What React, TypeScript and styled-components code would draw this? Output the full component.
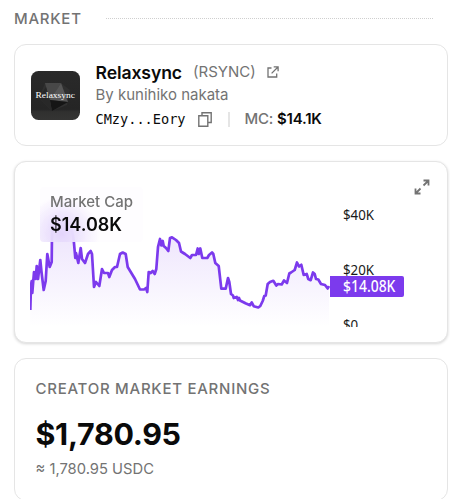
import React from "react";
import styled, { createGlobalStyle } from "styled-components";

const GlobalStyle = createGlobalStyle`
  * { box-sizing: border-box; }
  body { margin: 0; background: #fff; overflow: hidden; font-family: Inter, sans-serif; color: #0a0a0a; }
  #root { height: 499px; overflow: hidden; }
`;

const Page = styled.main`
  width: 450px;
  padding: 8px 2px 0 14px;
  display: flex;
  flex-direction: column;
`;

const SectionHeader = styled.header`
  display: flex;
  align-items: center;
  gap: 24px;
  height: 21px;
  padding-right: 15px;
  margin-bottom: 15px;
`;

const SectionTitle = styled.h2`
  margin: 0;
  font-size: 15px;
  line-height: 21px;
  font-weight: 500;
  letter-spacing: 0.75px;
  color: #737373;
`;

const DottedRule = styled.span`
  flex: 1;
  border-top: 1px dotted #cfcfcf;
`;

const Card = styled.section<{ $height: number; $raised?: boolean }>`
  flex: none;
  height: ${(p) => p.$height}px;
  border: 1px solid #e5e5e5;
  border-radius: 12px;
  background: #fff;
  margin-bottom: 15px;
  box-shadow: ${(p) => (p.$raised ? "0 1px 3px rgba(0,0,0,.16)" : "none")};
`;

const TokenCard = styled(Card)`
  display: flex;
  align-items: center;
  gap: 16px;
  padding: 0 16px 0 15.5px;
`;

const Artwork = styled.svg`
  width: 49px;
  height: 49px;
  flex: none;
`;

const TokenInfo = styled.div`
  display: flex;
  flex-direction: column;
  padding-top: 1px;
`;

const InfoRow = styled.div<{ $height: number; $gap?: number }>`
  display: flex;
  align-items: center;
  height: ${(p) => p.$height}px;
  gap: ${(p) => p.$gap ?? 0}px;
  white-space: nowrap;
`;

const TokenName = styled.span`
  font-size: 17.6px;
  font-weight: 600;
  line-height: 24px;
  letter-spacing: -0.1px;
  padding-top: 3px;
`;

const Muted = styled.span`
  font-size: 15px;
  line-height: 22px;
  color: #737373;
`;

const Address = styled.span`
  margin-right: 12px;
  font: 13.6px/20px "DejaVu Sans Mono", monospace;
`;

const Divider = styled.span`
  width: 2px;
  height: 15px;
  margin: 0 15px 0 16px;
  background: #e5e5e5;
`;

const MarketCap = styled.span`
  font-size: 15px;
  font-weight: 500;
  line-height: 20px;
  letter-spacing: -0.2px;
  color: #737373;
  b { color: #0a0a0a; font-weight: 600; }
`;

const Icon = styled.svg`
  display: block;
  flex: none;
  fill: none;
  stroke: #737373;
`;

const ChartCard = styled(Card)`
  position: relative;
  padding-left: 15px;
  display: flex;
`;

const Plot = styled.svg`
  display: block;
  flex: none;
  width: 300px;
  height: 165px;
`;

const PriceAxis = styled.div`
  position: relative;
  width: 80px;
  height: 165px;
  overflow: hidden;
  font-family: "Noto Sans", sans-serif;
  font-size: 15.3px;
  line-height: 20px;
  color: #191919;
`;

const AxisText = styled.span<{ $scale?: number }>`
  display: inline-block;
  transform: scaleX(${(p) => p.$scale ?? 0.87});
  transform-origin: left;
`;

const Tick = styled.span<{ $y: number }>`
  position: absolute;
  left: 13px;
  top: ${(p) => p.$y}px;
`;

const PriceTag = styled.span`
  position: absolute;
  left: 0;
  top: 114px;
  width: 74px;
  height: 21px;
  padding-left: 13px;
  border-radius: 0 2px 2px 0;
  background: #7c3aed;
  color: #fff;
  font-weight: 500;
`;

const Legend = styled.div`
  position: absolute;
  left: 25px;
  top: 25px;
  width: 103px;
  height: 55px;
  padding: 4px 10px;
  border-radius: 4px;
  background:
    radial-gradient(ellipse 38px 38px at 22px 47px, rgba(124, 58, 237, 0.19), rgba(124, 58, 237, 0.1) 50%, transparent),
    rgba(254, 253, 255, 0.88);
  backdrop-filter: blur(12px);
`;

const LegendLabel = styled.div`
  font-size: 15px;
  font-weight: 500;
  line-height: 22px;
  color: #737373;
`;

const LegendValue = styled.div`
  font-size: 18px;
  font-weight: 600;
  line-height: 24px;
`;

const ExpandButton = styled.button`
  position: absolute;
  left: 399px;
  top: 17px;
  width: 16px;
  height: 16px;
  padding: 0;
  border: 0;
  background: none;
`;

const EarningsCard = styled(Card)`
  padding: 20px 20.5px;
`;

const EarningsTitle = styled.h3`
  margin: 0;
  font-size: 15px;
  line-height: 20px;
  font-weight: 500;
  letter-spacing: 0.74px;
  color: #737373;
`;

const EarningsAmount = styled.div`
  margin-top: 16px;
  font-size: 30.4px;
  line-height: 38px;
  font-weight: 700;
  letter-spacing: -0.3px;
`;

const EarningsNote = styled.div`
  margin-top: 5px;
  font-size: 14.75px;
  line-height: 22px;
  color: #737373;
`;

/* Price samples in plot units: x from the left of the plot, y from its top. */
const PRICE_POINTS =
  "0.3,148 1,123 1.7,119 2.3,131 4,110 5.7,117 6.7,104 8,117 10.3,98 11.5,110 13.7,128 15.7,119 17.3,92 19.7,105 21.7,100 22,70 24,54 27,60 30,50 34,57 38,50 41,62 43.7,78 45.3,96 46,91 48.3,101 50.7,86 52,97 55,101 58,92 60.7,89 62,92 64,125 66,120 69.3,124 72,107 74,111 78,111 79.3,115 82,108 85,105 87,105 90,92 92.7,90.5 95.7,92 97.7,105 105,117 110,127.5 114,127.5 116,126 117.3,130 118.7,110 120.7,111 122.7,109 124.7,112 126.3,107 128,85 130,77 131.3,83.5 132.7,79 133.7,84 136,86 138.3,89 140,76 142,75.3 146,78 149,81 151,89.5 155,92 160.3,96 162,93 166,93 167.7,86.5 168.7,92 170.3,86.5 172.3,96 177.3,96 179,93 182,90.5 183.3,92 185.3,101 188.7,104 191.3,126.7 195.7,126.7 198,116 199.3,120 201,132 203,133.5 203.7,136 206.7,135 208,138 209,136 210,138.5 216,141.5 220,143.2 221.7,140.5 223.7,144.2 228.3,145.5 230.3,144 232.7,139 234.3,134 235.7,133.5 237.7,122 240,120 243.3,118.8 246.3,123.5 248,122 251.7,122.5 254,118.5 257,121 259.3,111.5 261,110.5 264.7,108 267,100.5 269,104.5 271.3,102.8 273.7,113 276.7,112 278.3,117 280.7,118.2 283,110.5 284.7,112 286,117 288.3,117.5 291,122 295,123 297.7,126.5 299,124";

function TokenArtwork() {
  return (
    <Artwork viewBox="0 0 49 49" aria-label="Relaxsync artwork">
      <defs>
        <linearGradient id="art" x1="0" y1="0" x2="0" y2="1">
          <stop offset="0" stopColor="#2a2a2a" />
          <stop offset=".78" stopColor="#252525" />
          <stop offset=".83" stopColor="#30302f" />
          <stop offset="1" stopColor="#343433" />
        </linearGradient>
      </defs>
      <rect width="49" height="49" rx="7.5" fill="url(#art)" />
      <path d="M8 27 14 12 30 12 39 19 36 34 21 40Z" fill="#303030" />
      <path d="M14 12 30 12 19 30Z" fill="#484848" />
      <path d="M30 12 37 31 19 29Z" fill="#565656" />
      <path d="M19 29 37 31 21 40Z" fill="#151515" />
      <path d="M8 27 15 16 19 30 21 40Z" fill="#282828" />
      <text x="4.5" y="27" fontFamily="Liberation Serif" fontSize="9" fill="#fff" textLength="39.5" lengthAdjust="spacingAndGlyphs">Relaxsync</text>
    </Artwork>
  );
}

export default function App() {
  return (
    <>
      <GlobalStyle />
      <Page>
        <SectionHeader>
          <SectionTitle>MARKET</SectionTitle>
          <DottedRule />
        </SectionHeader>

        <TokenCard $height={102}>
          <TokenArtwork />
          <TokenInfo>
            <InfoRow $height={23} $gap={11}>
              <TokenName>Relaxsync</TokenName>
              <Muted>(RSYNC)</Muted>
              <Icon width="12" height="12" viewBox="0 0 12 12" strokeWidth="1.3">
                <path d="M4.5 2H1v9h8.7V7.5M6.7.9h4.4v4.4M4.6 7.4 11 1" />
              </Icon>
            </InfoRow>
            <InfoRow $height={24}>
              <Muted>By kunihiko nakata</Muted>
            </InfoRow>
            <InfoRow $height={24}>
              <Address>CMzy...Eory</Address>
              <Icon width="14" height="15" viewBox="0 0 14 15" strokeWidth="1.4">
                <path d="M.8 3.8h9v10.4h-9zM4 3.5V.8h9.2v9.7H10" />
              </Icon>
              <Divider />
              <MarketCap>MC: <b>$14.1K</b></MarketCap>
            </InfoRow>
          </TokenInfo>
        </TokenCard>

        <ChartCard $height={182} $raised>
          <Plot viewBox="0 0 300 165">
            <defs>
              <linearGradient id="area" gradientUnits="userSpaceOnUse" x1="0" y1="50" x2="0" y2="165">
                <stop offset="0" stopColor="#7c3aed" stopOpacity=".16" />
                <stop offset="1" stopColor="#7c3aed" stopOpacity="0" />
              </linearGradient>
            </defs>
            <polygon points={`0,165 ${PRICE_POINTS} 299,165`} fill="url(#area)" />
            <polyline points={PRICE_POINTS} fill="none" stroke="#7c3aed" strokeWidth="2.7" strokeLinejoin="round" />
          </Plot>
          <PriceAxis>
            <Tick $y={42}><AxisText>$40K</AxisText></Tick>
            <Tick $y={97}><AxisText>$20K</AxisText></Tick>
            <Tick $y={152}><AxisText>$0</AxisText></Tick>
            <PriceTag><AxisText $scale={0.91}>$14.08K</AxisText></PriceTag>
          </PriceAxis>
          <Legend>
            <LegendLabel>Market Cap</LegendLabel>
            <LegendValue>$14.08K</LegendValue>
          </Legend>
          <ExpandButton aria-label="Expand chart">
            <Icon width="16" height="16" viewBox="0 0 16 16" strokeWidth="1.8">
              <path d="M9.5 1.5h5v5M14.5 1.5 9.5 6.5M1.5 9.5v5h5M1.5 14.5l5-5" />
            </Icon>
          </ExpandButton>
        </ChartCard>

        <EarningsCard $height={143}>
          <EarningsTitle>CREATOR MARKET EARNINGS</EarningsTitle>
          <EarningsAmount>$1,780.95</EarningsAmount>
          <EarningsNote>≈ 1,780.95 USDC</EarningsNote>
        </EarningsCard>
      </Page>
    </>
  );
}
